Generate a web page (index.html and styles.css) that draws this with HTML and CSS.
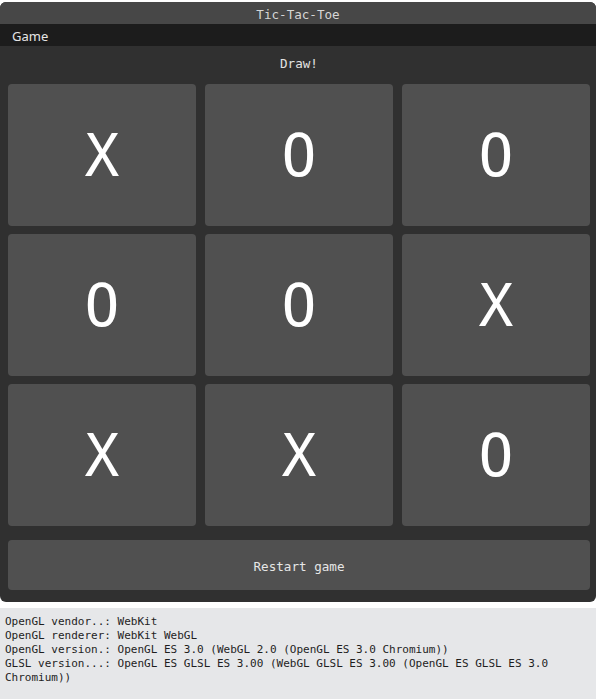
FILE: index.html
```html
<!DOCTYPE html>
<html>
<head>
<meta charset="utf-8">
<link rel="stylesheet" href="styles.css">
</head>
<body>
<div class="window">
  <div class="titlebar">Tic-Tac-Toe</div>
  <div class="menubar"><span class="menu-item">Game</span></div>
  <div class="content">
    <div class="status">Draw!</div>
    <div class="board">
      <div class="cell">X</div>
      <div class="cell">O</div>
      <div class="cell">O</div>
      <div class="cell">O</div>
      <div class="cell">O</div>
      <div class="cell">X</div>
      <div class="cell">X</div>
      <div class="cell">X</div>
      <div class="cell">O</div>
    </div>
    <div class="restart">Restart game</div>
  </div>
</div>
<pre class="info">OpenGL vendor..: WebKit
OpenGL renderer: WebKit WebGL
OpenGL version.: OpenGL ES 3.0 (WebGL 2.0 (OpenGL ES 3.0 Chromium))
GLSL version...: OpenGL ES GLSL ES 3.00 (WebGL GLSL ES 3.00 (OpenGL ES GLSL ES 3.0 Chromium))</pre>
</body>
</html>
```
FILE: styles.css
```css
html, body {
  margin: 0;
  padding: 0;
  background: #ffffff;
}
body {
  padding-top: 2px;
  width: 596px;
}
.window {
  background: #303030;
  border-radius: 6px;
  overflow: hidden;
  height: 600px;
  display: flex;
  flex-direction: column;
}
.titlebar {
  height: 22px;
  background: #474747;
  color: #d6d6d6;
  font-family: "DejaVu Sans Mono", monospace;
  font-size: 12.6px;
  line-height: 25px;
  text-align: center;
}
.menubar {
  height: 22px;
  background: #1c1c1c;
  color: #e6e6e6;
  font-family: "Noto Sans", sans-serif;
  font-size: 13px;
  line-height: 24px;
  padding-left: 12px;
}
.content {
  padding: 8px 6px 12px 8px;
  display: flex;
  flex-direction: column;
}
.status {
  height: 22px;
  line-height: 20px;
  text-align: center;
  color: #e2e2e2;
  font-family: "DejaVu Sans Mono", monospace;
  font-size: 12.6px;
  margin-bottom: 8px;
}
.board {
  display: grid;
  grid-template-columns: 188px 188px 188px;
  grid-template-rows: 142px 142px 142px;
  column-gap: 9px;
  row-gap: 8px;
}
.cell {
  background: #505050;
  border-radius: 4px;
  display: flex;
  align-items: center;
  justify-content: center;
  color: #ffffff;
  font-family: "DejaVu Sans Mono", monospace;
  font-size: 58px;
  padding-top: 2px;
}
.restart {
  margin-top: 14px;
  height: 50px;
  width: 582px;
  background: #505050;
  border-radius: 4px;
  color: #e6e6e6;
  font-family: "DejaVu Sans Mono", monospace;
  font-size: 12.6px;
  line-height: 54px;
  text-align: center;
}
.info {
  margin: 6px 0 0 0;
  padding: 7px 5px 12px 5px;
  background: #e6e7e9;
  color: #1e1e1e;
  font-family: "DejaVu Sans Mono", monospace;
  font-size: 11px;
  line-height: 14px;
  white-space: pre-wrap;
  min-height: 80px;
}
```
